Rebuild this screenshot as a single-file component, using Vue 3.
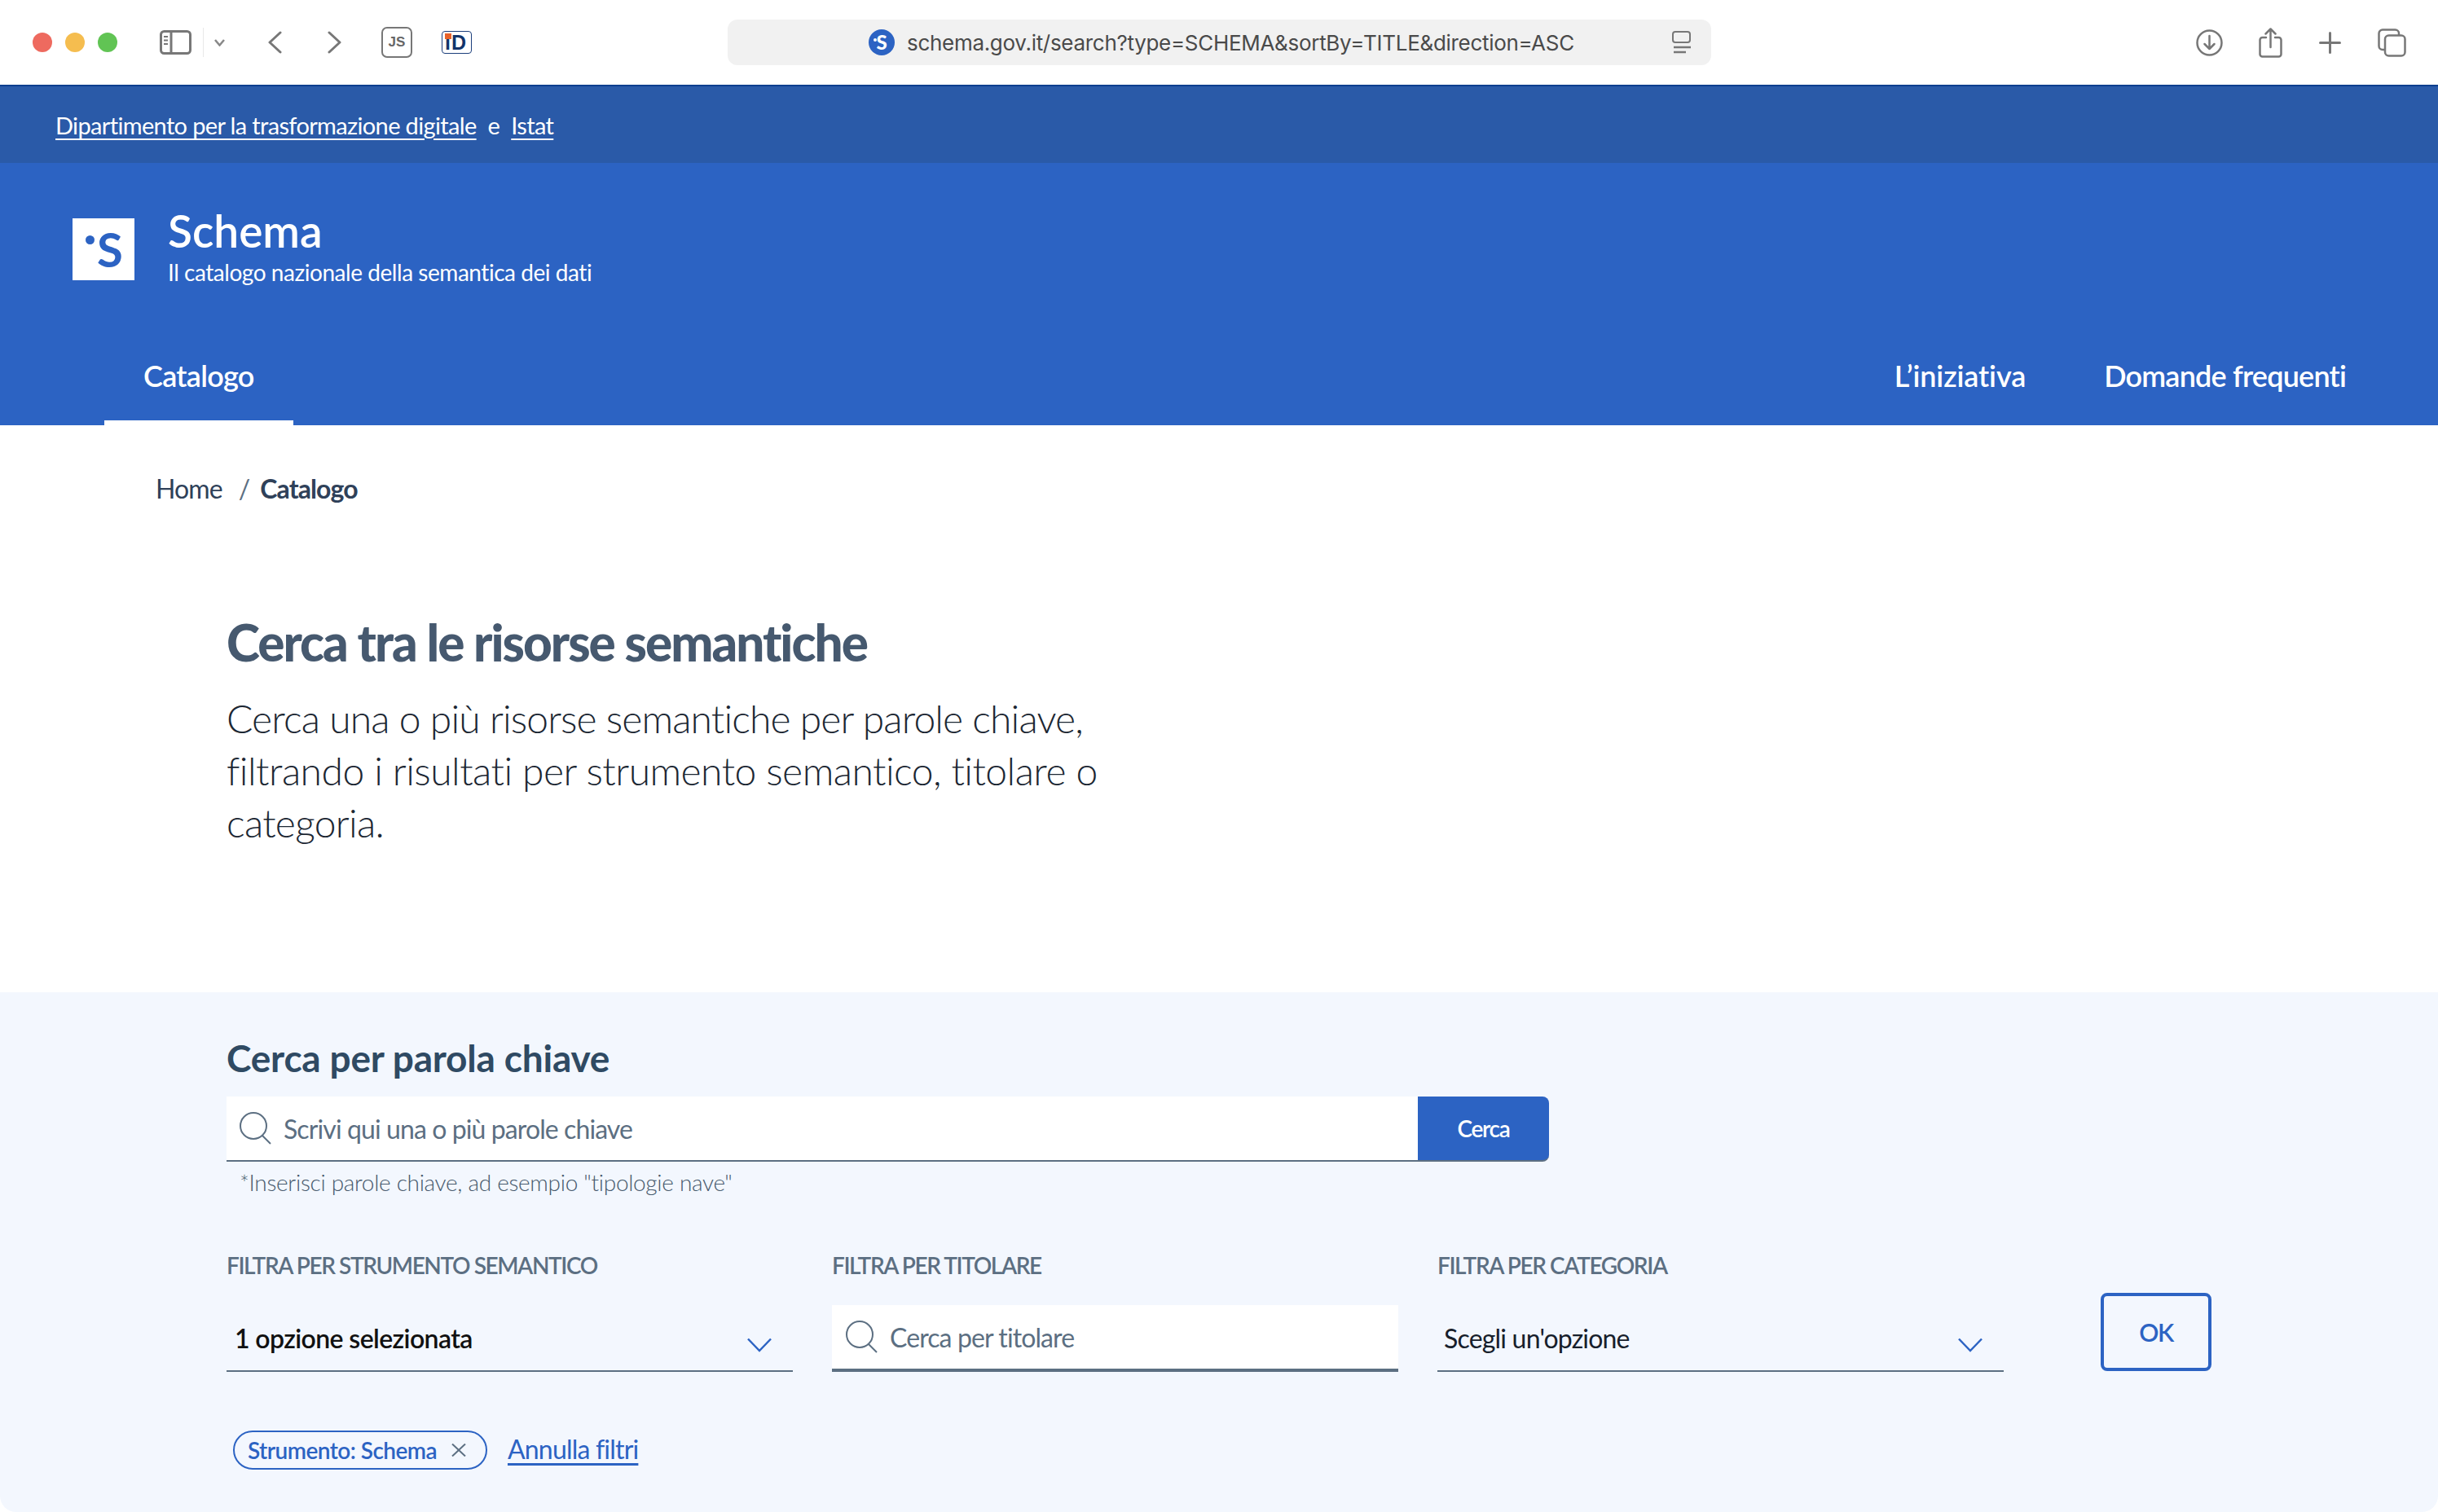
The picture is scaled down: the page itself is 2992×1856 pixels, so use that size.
<script setup>
const urlText = 'schema.gov.it/search?type=SCHEMA&sortBy=TITLE&direction=ASC'
const filters = [
  { label: 'FILTRA PER STRUMENTO SEMANTICO', type: 'select', value: '1 opzione selezionata', strong: true },
  { label: 'FILTRA PER TITOLARE', type: 'search', value: 'Cerca per titolare' },
  { label: 'FILTRA PER CATEGORIA', type: 'select', value: "Scegli un'opzione", strong: false }
]
</script>

<template>
  <div class="page">
    <div class="toolbar">
      <div class="lights">
        <span class="light red"></span>
        <span class="light yellow"></span>
        <span class="light green"></span>
      </div>
      <svg class="tb-sidebar" width="39" height="30" viewBox="0 0 39 30" fill="none" stroke="#777" stroke-width="3">
        <rect x="1.500" y="1.500" width="36" height="27" rx="4" />
        <path d="M14 2v26" />
        <path d="M5 8h5M5 12.500h5M5 17h5" stroke-width="2" />
      </svg>
      <span class="tb-divider"></span>
      <svg class="tb-small" width="13" height="9" viewBox="0 0 13 9" fill="none" stroke="#888" stroke-width="2.500">
        <path d="M1 1l5.500 6.500L12 1" />
      </svg>
      <svg class="tb-back" width="17" height="28" viewBox="0 0 17 28" fill="none" stroke="#777" stroke-width="3" stroke-linecap="round" stroke-linejoin="round">
        <path d="M15 2L2 14l13 12" />
      </svg>
      <svg class="tb-forward" width="17" height="28" viewBox="0 0 17 28" fill="none" stroke="#777" stroke-width="3" stroke-linecap="round" stroke-linejoin="round">
        <path d="M2 2l13 12L2 26" />
      </svg>
      <div class="ext-js">JS</div>
      <div class="ext-id"><i></i>iD</div>
      <div class="address">
        <span class="favicon"><i></i>S</span>
        <span class="url">{{ urlText }}</span>
        <svg class="reader" width="23" height="28" viewBox="0 0 23 28" fill="none" stroke="#777">
          <rect x="1" y="1" width="21" height="13" rx="3" stroke-width="2" />
          <path d="M2 20h21" stroke-width="2.500" />
          <path d="M2 26h15" stroke-width="2.500" />
        </svg>
      </div>
      <div class="tb-right">
        <svg width="33" height="33" viewBox="0 0 33 33" fill="none" stroke="#777" stroke-width="2.500" stroke-linecap="round" stroke-linejoin="round">
          <circle cx="16.500" cy="16.500" r="15" />
          <path d="M16.500 8v16M10.500 18l6 6 6-6" />
        </svg>
        <svg class="r-share" width="29" height="37" viewBox="0 0 29 37" fill="none" stroke="#777" stroke-width="2.500" stroke-linecap="round" stroke-linejoin="round">
          <path d="M9 12H4.500a3 3 0 0 0-3 3v17.500a3 3 0 0 0 3 3h20a3 3 0 0 0 3-3V15a3 3 0 0 0-3-3H20" />
          <path d="M14.500 24V2M8.500 7.500l6-6 6 6" />
        </svg>
        <svg class="r-plus" width="27" height="27" viewBox="0 0 27 27" fill="none" stroke="#777" stroke-width="3" stroke-linecap="round">
          <path d="M13.500 1.500v24M1.500 13.500h24" />
        </svg>
        <svg class="r-tabs" width="35" height="35" viewBox="0 0 35 35" fill="none" stroke="#777" stroke-width="2.500">
          <path d="M8 26H6a4.500 4.500 0 0 1-4.500-4.500V6A4.500 4.500 0 0 1 6 1.500h15.500A4.500 4.500 0 0 1 26 6v2" />
          <rect x="9" y="8.500" width="24.500" height="25" rx="4.500" />
        </svg>
      </div>
    </div>

    <div class="slim">
      <a>Dipartimento per la trasformazione digitale</a>
      <span class="slim-e">e</span>
      <a>Istat</a>
    </div>

    <header class="header">
      <div class="brand">
        <div class="logo"><i></i><span>S</span></div>
        <div class="brand-text">
          <div class="brand-title">Schema</div>
          <div class="brand-sub">Il catalogo nazionale della semantica dei dati</div>
        </div>
      </div>
      <nav class="nav">
        <a class="nav-item active">Catalogo</a>
        <div class="nav-right">
          <a class="nav-item wide">L’iniziativa</a>
          <a class="nav-item">Domande frequenti</a>
        </div>
      </nav>
    </header>

    <div class="breadcrumb">
      <span>Home</span>
      <span class="sep">/</span>
      <strong>Catalogo</strong>
    </div>

    <section class="intro">
      <h1>Cerca tra le risorse semantiche</h1>
      <p>
        <span class="line-a">Cerca una o più risorse semantiche per parole chiave,</span><br />
        <span class="line-b">filtrando i risultati per strumento semantico, titolare o</span><br />
        categoria.
      </p>
    </section>

    <section class="search">
      <h2>Cerca per parola chiave</h2>
      <div class="search-row">
        <div class="search-input">
          <svg class="lens" width="40" height="40" viewBox="0 0 40 40" fill="none" stroke="#5c6f82" stroke-width="2">
            <circle cx="17" cy="17" r="16" />
            <path d="M28 29l10 10" />
          </svg>
          <span class="placeholder">Scrivi qui una o più parole chiave</span>
        </div>
        <button class="search-btn">Cerca</button>
      </div>
      <div class="hint">*Inserisci parole chiave, ad esempio "tipologie nave"</div>

      <div class="filters">
        <div v-for="f in filters" :key="f.label" class="filter">
          <label>{{ f.label }}</label>
          <div v-if="f.type === 'select'" class="select">
            <span :class="{ strong: f.strong }">{{ f.value }}</span>
            <svg class="chev" width="30" height="18" viewBox="0 0 30 18" fill="none" stroke="#2c63c3" stroke-width="2.500">
              <path d="M1 1.500l14 14.500L29 1.500" />
            </svg>
          </div>
          <div v-else class="owner">
            <svg class="lens" width="40" height="40" viewBox="0 0 40 40" fill="none" stroke="#5c6f82" stroke-width="2">
              <circle cx="17" cy="17" r="16" />
              <path d="M28 29l10 10" />
            </svg>
            <span class="placeholder">{{ f.value }}</span>
          </div>
        </div>
        <button class="ok">OK</button>
      </div>

      <div class="active-filters">
        <span class="chip">
          Strumento: Schema
          <svg width="18" height="16" viewBox="0 0 18 16" fill="none" stroke="#5c6f82" stroke-width="2">
            <path d="M1 0.500l16 15M17 0.500L1 15.500" />
          </svg>
        </span>
        <a class="reset">Annulla filtri</a>
      </div>
    </section>
  </div>
</template>

<style>
html, body {
  margin: 0;
  background: #fff;
  overflow: hidden;
}
</style>

<style scoped>
.page {
  width: 2992px;
  height: 1856px;
  overflow: hidden;
  border-radius: 0 0 20px 20px;
  font-family: Lato, "Noto Sans", sans-serif;
  color: #17324d;
}

/* browser bar */
.toolbar {
  height: 104px;
  box-sizing: border-box;
  display: flex;
  align-items: center;
  padding-left: 40px;
  background: #fff;
}
.lights {
  display: flex;
  gap: 16px;
}
.light {
  width: 24px;
  height: 24px;
  border-radius: 50%;
}
.red { background: #ee6a5f; }
.yellow { background: #f5bd4f; }
.green { background: #61c454; }
.tb-sidebar { margin-left: 52px; }
.tb-divider {
  width: 1px;
  height: 36px;
  margin-left: 14px;
  background: #e8e8e8;
}
.tb-small { margin-left: 13px; }
.tb-back { margin-left: 53px; }
.tb-forward { margin-left: 56px; }
.ext-js {
  width: 38px;
  height: 38px;
  box-sizing: border-box;
  margin-left: 49px;
  border: 2px solid #777;
  border-radius: 7px;
  font-family: "Liberation Sans", sans-serif;
  font-size: 17px;
  font-weight: 700;
  line-height: 34px;
  text-align: center;
  color: #666;
}
.ext-id {
  width: 37px;
  height: 28px;
  box-sizing: border-box;
  margin-left: 36px;
  padding-left: 3px;
  border: 1.500px solid #1c3f7c;
  border-radius: 4px;
  background: #fff;
  font-family: "Liberation Sans", sans-serif;
  font-size: 25px;
  font-weight: 700;
  line-height: 26px;
  letter-spacing: 1px;
  color: #12346b;
  position: relative;
  overflow: hidden;
}
.ext-id i {
  position: absolute;
  left: 3px;
  top: 2px;
  width: 8px;
  height: 7px;
  background: #e8622a;
}
.address {
  width: 1207px;
  height: 56px;
  margin-left: 314px;
  display: flex;
  align-items: center;
  padding-left: 173px;
  box-sizing: border-box;
  background: #f1f1f1;
  border-radius: 12px;
  position: relative;
}
.favicon {
  width: 32px;
  height: 32px;
  border-radius: 50%;
  background: #2c63c3;
  color: #fff;
  font-family: Lato, sans-serif;
  font-size: 24px;
  font-weight: 900;
  line-height: 32px;
  text-align: center;
  position: relative;
}
.favicon i {
  position: absolute;
  left: 6px;
  top: 11px;
  width: 4px;
  height: 4px;
  border-radius: 50%;
  background: #fff;
}
.url {
  margin-left: 15px;
  font-family: Inter, sans-serif;
  font-size: 26px;
  letter-spacing: -0.3px;
  color: #4a4a4a;
  white-space: nowrap;
}
.reader {
  position: absolute;
  left: 1159px;
  top: 14px;
}
.tb-right {
  display: flex;
  align-items: center;
  margin-left: 595px;
}
.r-share { margin-left: 44px; }
.r-plus { margin-left: 45px; }
.r-tabs { margin-left: 45px; }

/* slim header */
.slim {
  height: 96px;
  box-sizing: border-box;
  display: flex;
  align-items: center;
  padding-left: 68px;
  border-top: 2px solid #0d3f8f;
  background: #2a5aa8;
  color: #fff;
  font-size: 29px;
  letter-spacing: -0.65px;
}
.slim a {
  text-decoration: underline;
  text-underline-offset: 5px;
}
.slim-e { margin: 0 14px; }

/* main header */
.header {
  height: 322px;
  box-sizing: border-box;
  padding-top: 59px;
  display: flex;
  flex-direction: column;
  justify-content: space-between;
  background: #2c63c3;
  color: #fff;
}
.brand {
  display: flex;
  align-items: center;
  padding-left: 89px;
}
.logo {
  width: 76px;
  height: 76px;
  background: #fff;
  color: #2c63c3;
  font-size: 58px;
  font-weight: 700;
  line-height: 76px;
  text-align: center;
  position: relative;
}
.logo span {
  position: relative;
  left: 8px;
}
.logo i {
  position: absolute;
  left: 16px;
  top: 21px;
  width: 11px;
  height: 11px;
  border-radius: 50%;
  background: #2c63c3;
}
.brand-text {
  margin-left: 41px;
  margin-top: -8px;
}
.brand-title {
  font-size: 55px;
  font-weight: 600;
  line-height: 64px;
}
.brand-sub {
  font-size: 28px;
  line-height: 38px;
  letter-spacing: -0.45px;
}
.nav {
  display: flex;
  justify-content: space-between;
  padding: 0 65px 0 128px;
}
.nav-item {
  display: block;
  padding: 0 48px;
  height: 86px;
  box-sizing: border-box;
  font-size: 36px;
  font-weight: 600;
  letter-spacing: -0.8px;
  line-height: 50px;
}
.nav-item.wide {
  letter-spacing: -0.1px;
}
.nav-item.active {
  letter-spacing: -0.7px;
  border-bottom: 6px solid #fff;
}
.nav-right {
  display: flex;
}

/* breadcrumb */
.breadcrumb {
  display: flex;
  align-items: center;
  height: 154px;
  padding-left: 191px;
  font-size: 32px;
  letter-spacing: -0.9px;
  color: #2f4159;
}
.sep { margin: 0 13px 0 20px; color: #5c6f82; }
.breadcrumb strong { font-weight: 700; }

/* intro */
.intro {
  height: 542px;
  box-sizing: border-box;
  padding: 74px 0 0 278px;
}
.intro h1 {
  margin: 0;
  font-size: 62px;
  font-weight: 900;
  letter-spacing: -2px;
  line-height: 76px;
  color: #46596f;
}
.intro p {
  margin: 24px 0 0;
  font-size: 48px;
  font-weight: 300;
  letter-spacing: -0.7px;
  line-height: 64px;
  color: #1c2733;
}
.line-a { letter-spacing: -0.88px; }
.line-b { letter-spacing: -0.53px; }

/* search area */
.search {
  height: 638px;
  box-sizing: border-box;
  padding: 53px 0 0 278px;
  background: #f3f7fe;
}
.search h2 {
  margin: 0;
  font-size: 46px;
  font-weight: 700;
  letter-spacing: -0.2px;
  line-height: 56px;
  color: #2f4a63;
}
.search-row {
  display: flex;
  margin-top: 19px;
  width: 1623px;
  height: 80px;
}
.search-input {
  flex: 1;
  display: flex;
  align-items: center;
  box-sizing: border-box;
  padding-left: 16px;
  background: #fff;
  border-bottom: 2px solid #5c6f82;
}
.lens { flex: none; }
.placeholder {
  margin-left: 14px;
  font-size: 32px;
  font-weight: 400;
  letter-spacing: -0.9px;
  color: #5c6f82;
}
.search-btn {
  width: 161px;
  border: 0;
  border-bottom: 2px solid #5c6f82;
  border-radius: 0 8px 8px 0;
  background: #2c63c3;
  color: #fff;
  font-family: inherit;
  font-size: 28px;
  font-weight: 600;
  letter-spacing: -1.3px;
}
.hint {
  margin-top: 7px;
  padding-left: 16px;
  font-size: 28px;
  font-weight: 300;
  letter-spacing: -0.3px;
  line-height: 36px;
  color: #46596c;
}
.filters {
  display: flex;
  align-items: flex-end;
  margin-top: 66px;
}
.filter {
  width: 695px;
  margin-right: 48px;
}
.filter label {
  display: block;
  font-size: 28px;
  font-weight: 600;
  letter-spacing: -1.4px;
  line-height: 36px;
  color: #5c6f82;
}
.select {
  height: 82px;
  margin-top: 31px;
  box-sizing: border-box;
  display: flex;
  justify-content: space-between;
  align-items: center;
  padding: 0 26px 0 8px;
  border-bottom: 2px solid #5c6f82;
  font-size: 32px;
  letter-spacing: -0.8px;
  color: #17202b;
}
.select .strong {
  padding-left: 2px;
  font-weight: 600;
  letter-spacing: -0.6px;
  color: #111;
}
.chev {
  margin-top: 17px;
}
.owner {
  height: 82px;
  margin-top: 31px;
  box-sizing: border-box;
  display: flex;
  align-items: center;
  padding-left: 17px;
  background: #fff;
  border-bottom: 4px solid #5c6f82;
}
.ok {
  width: 136px;
  height: 96px;
  margin-left: 71px;
  margin-bottom: 1px;
  box-sizing: border-box;
  background: transparent;
  border: 4px solid #2c63c3;
  border-radius: 8px;
  color: #2c63c3;
  font-family: inherit;
  font-size: 30px;
  font-weight: 600;
  letter-spacing: -1.5px;
}
.active-filters {
  display: flex;
  align-items: center;
  margin-top: 72px;
  padding-left: 8px;
}
.chip {
  display: inline-flex;
  align-items: center;
  gap: 18px;
  height: 48px;
  box-sizing: border-box;
  padding: 0 24px 0 16px;
  border: 2px solid #2c63c3;
  border-radius: 24px;
  font-size: 28px;
  font-weight: 600;
  letter-spacing: -0.55px;
  color: #2c63c3;
}
.reset {
  margin: -3px 0 0 25px;
  font-size: 32px;
  letter-spacing: -0.8px;
  color: #2c63c3;
  text-decoration: underline;
  text-underline-offset: 5px;
}
</style>
